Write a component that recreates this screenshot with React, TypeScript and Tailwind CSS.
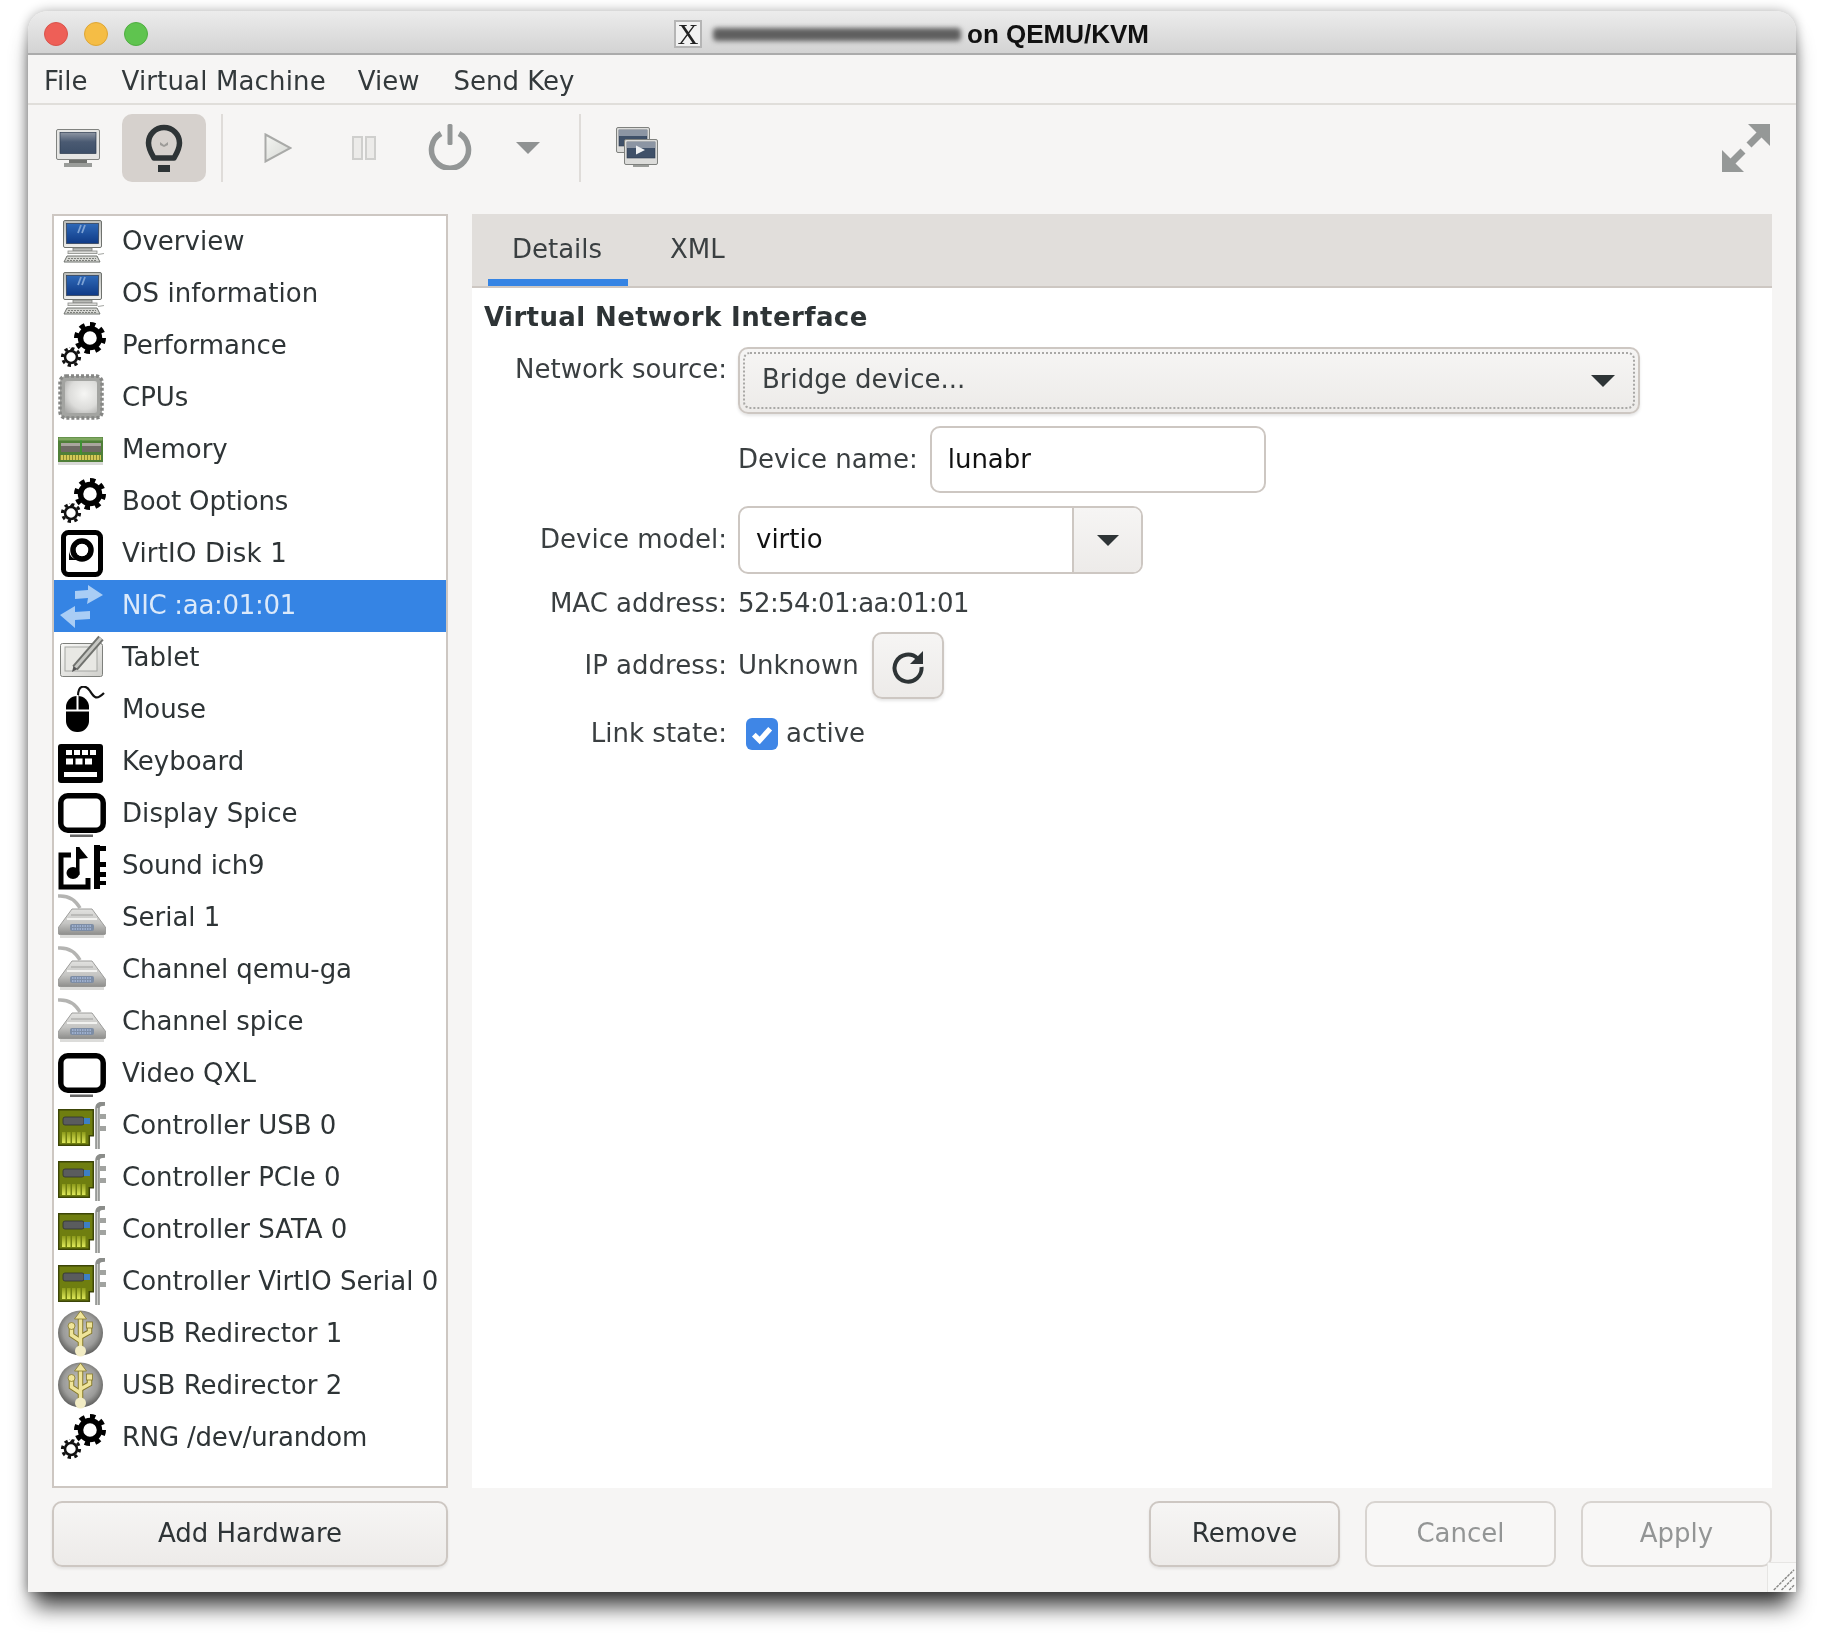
import React from "react";

// sidebar icons all sit in a 48x48 box
function Box({ children }: { children: React.ReactNode }) {
  return (
    <svg viewBox="0 0 48 48" className="w-[48px] h-[48px] shrink-0">
      {children}
    </svg>
  );
}

function ComputerIcon() {
  return (
    <Box>
      <defs>
        <linearGradient id="pcFrame" x1="0" y1="0" x2="0" y2="1">
          <stop offset="0" stopColor="#b9bbb8" />
          <stop offset="1" stopColor="#eeeeec" />
        </linearGradient>
        <linearGradient id="pcScreen" x1="0" y1="0" x2="0" y2="1">
          <stop offset="0" stopColor="#2f69b8" />
          <stop offset="1" stopColor="#0f3a86" />
        </linearGradient>
      </defs>
      <rect x="5.5" y="2.5" width="38" height="27" rx="1.5" fill="url(#pcFrame)" stroke="#6f726e" />
      <rect x="8.5" y="5.5" width="32" height="20" fill="url(#pcScreen)" stroke="#33435a" strokeWidth="0.8" />
      <path d="M23 7l-3 8M27 7l-3 8" stroke="#7ea2d4" strokeWidth="1.8" />
      <rect x="15" y="30" width="19" height="3" fill="#b9bbb7" stroke="#7c7e7a" strokeWidth="0.8" />
      <rect x="10" y="33" width="29" height="2.6" fill="#dededc" stroke="#8a8c88" strokeWidth="0.8" />
      <path d="M6 44l3-6h30l3 6z" fill="#d6d7d3" stroke="#6f726e" />
      <path d="M10 40.5h28M9 42.5h30" stroke="#7d7f7b" strokeWidth="1" strokeDasharray="2 1" />
      <path d="M40 36.5l6-1" stroke="#a5a7a3" strokeWidth="1.2" />
    </Box>
  );
}

function GearsIcon() {
  return (
    <Box>
      <circle cx="32" cy="16" r="9.5" fill="none" stroke="#000" strokeWidth="5.5" />
      <circle cx="32" cy="16" r="13.5" fill="none" stroke="#000" strokeWidth="5" pathLength={16} strokeDasharray="1 1" />
      <circle cx="13" cy="35" r="6" fill="none" stroke="#111" strokeWidth="2.6" />
      <circle cx="13" cy="35" r="8.6" fill="none" stroke="#111" strokeWidth="3" pathLength={16} strokeDasharray="1 1" />
    </Box>
  );
}

function CpuIcon() {
  return (
    <Box>
      <defs>
        <radialGradient id="cpuCore" cx="0.6" cy="0.4" r="0.8">
          <stop offset="0" stopColor="#f6f6f4" />
          <stop offset="0.6" stopColor="#dcdcda" />
          <stop offset="1" stopColor="#a8a8a6" />
        </radialGradient>
      </defs>
      <rect x="2" y="2" width="42" height="42" rx="6" fill="#a3a4a1" />
      <rect x="2" y="2" width="42" height="42" rx="6" fill="none" stroke="#868785" strokeWidth="3.5" strokeDasharray="3 2" />
      <rect x="7" y="7" width="32" height="32" rx="2" fill="url(#cpuCore)" />
    </Box>
  );
}

function MemoryIcon() {
  return (
    <Box>
      <rect x="0" y="11" width="45" height="25" fill="#4f7f38" />
      <rect x="0.5" y="11.5" width="44" height="3" fill="#7fa860" />
      <rect x="3" y="17" width="19" height="9" fill="#6e6a64" />
      <rect x="24" y="17" width="19" height="9" fill="#6e6a64" />
      <rect x="3" y="17" width="19" height="3" fill="#a9a59e" />
      <rect x="24" y="17" width="19" height="3" fill="#a9a59e" />
      <rect x="2" y="29" width="41" height="5" fill="#d3c957" />
      <path d="M2 31.5h41" stroke="#8a8a30" strokeWidth="5" strokeDasharray="1 2" />
      <rect x="22.5" y="14" width="1" height="15" fill="#2fa32f" />
      <rect x="0" y="36" width="45" height="3" fill="#d9d9d7" />
    </Box>
  );
}

function DiskIcon() {
  return (
    <Box>
      <rect x="5.5" y="2.5" width="37" height="42" rx="5" fill="#fff" stroke="#000" strokeWidth="5" />
      <circle cx="24" cy="20" r="9" fill="#fff" stroke="#000" strokeWidth="5.5" />
      <path d="M11 20v10h13v-1.500a9 9 0 0 1-13-8.500z" fill="#000" />
      <circle cx="24" cy="20" r="6" fill="#fff" />
    </Box>
  );
}

function NicIcon() {
  return (
    <Box>
      <path d="M30 3l15 10-16 9 1-6-13 1v-8l13-1z" fill="#a9cdf5" />
      <path d="M2 33l15-9 0 6 15-1v8l-15 1v8z" fill="#a9cdf5" />
    </Box>
  );
}

function TabletIcon() {
  return (
    <Box>
      <defs>
        <linearGradient id="tabBody" x1="0" y1="0" x2="1" y2="1">
          <stop offset="0" stopColor="#fafaf8" />
          <stop offset="1" stopColor="#cfcfcb" />
        </linearGradient>
      </defs>
      <rect x="2.5" y="9.5" width="42" height="33" rx="2" fill="url(#tabBody)" stroke="#7e807c" />
      <rect x="7" y="13" width="32" height="24" fill="#e8e8e4" stroke="#a4a6a2" />
      <path d="M43 4L17 34" stroke="#70726e" strokeWidth="7" />
      <path d="M43 4L17 34" stroke="#c6c7c3" strokeWidth="3" />
      <path d="M14 38l1.500-6 4 3z" fill="#555" />
    </Box>
  );
}

function MouseIcon() {
  return (
    <Box>
      <path d="M20 10c0-12 8-11 12-5s6 10 14 2" fill="none" stroke="#111" strokeWidth="2.200" />
      <rect x="8" y="10" width="23" height="36" rx="11" fill="#000" />
      <rect x="18.5" y="9" width="2" height="15" fill="#fff" />
      <rect x="8" y="23.5" width="23" height="2" fill="#fff" />
    </Box>
  );
}

function KeyboardIcon() {
  return (
    <Box>
      <rect x="0" y="6" width="45" height="39" rx="3" fill="#000" />
      <path d="M8 14.500h31" stroke="#fff" strokeWidth="5" strokeDasharray="6 2" />
      <path d="M8 23.500h26" stroke="#fff" strokeWidth="6" strokeDasharray="7 2.500" />
      <rect x="6" y="34" width="33" height="5" fill="#fff" />
    </Box>
  );
}

function DisplayIcon() {
  return (
    <Box>
      <rect x="2.800" y="5.800" width="42.400" height="34.400" rx="7" fill="#fff" stroke="#000" strokeWidth="5.500" />
      <rect x="12" y="44.500" width="23" height="2.500" fill="#666" />
    </Box>
  );
}

function SoundIcon() {
  return (
    <Box>
      <path d="M13 13H3v32h27v-9" fill="none" stroke="#000" strokeWidth="5" />
      <rect x="18" y="5" width="3.500" height="28" fill="#000" />
      <path d="M21 5l9 11-9 1z" fill="#000" />
      <ellipse cx="15" cy="31" rx="6.500" ry="6" fill="#000" />
      <rect x="36" y="3" width="6" height="44" fill="#000" />
      <rect x="42" y="4" width="6" height="5" fill="#000" />
      <rect x="42" y="20" width="6" height="5" fill="#000" />
      <rect x="42" y="30" width="6" height="5" fill="#000" />
      <rect x="42" y="39" width="6" height="4" fill="#000" />
    </Box>
  );
}

function SerialIcon() {
  return (
    <Box>
      <defs>
        <linearGradient id="serBody" x1="0" y1="0" x2="0" y2="1">
          <stop offset="0" stopColor="#e2e2e0" />
          <stop offset="0.55" stopColor="#c4c4c2" />
          <stop offset="1" stopColor="#8c8c8a" />
        </linearGradient>
      </defs>
      <path d="M0 2c12-1 18 5 22 12" fill="none" stroke="#b4b4b2" strokeWidth="3.500" />
      <path d="M14 15h20l14 19v4a3 3 0 0 1-3 3H3a3 3 0 0 1-3-3v-4z" fill="url(#serBody)" stroke="#9c9c9a" />
      <path d="M9 25h30" stroke="#f2f2f0" strokeWidth="2" />
      <path d="M13 21h22" stroke="#9f9f9d" strokeWidth="1" />
      <rect x="12" y="30" width="24" height="7" rx="2" fill="#7d8da5" />
      <path d="M14 32h20M14 35h20" stroke="#a8bbdd" strokeWidth="1.500" strokeDasharray="1.500 1" />
      <rect x="2" y="41" width="44" height="3" fill="#dcdcda" />
    </Box>
  );
}

function ControllerIcon() {
  return (
    <Box>
      <defs>
        <linearGradient id="cardFingers" x1="0" y1="0" x2="0" y2="1">
          <stop offset="0" stopColor="#8c9a1a" />
          <stop offset="1" stopColor="#dfe95a" />
        </linearGradient>
      </defs>
      <path d="M0.700 7.700h34.600v26h-4v9.600H0.700z" fill="#6f7e10" stroke="#3c4507" strokeWidth="1.500" />
      <rect x="5" y="15" width="21" height="8" rx="2" fill="#5a5c5e" stroke="#2f3133" strokeWidth="0.800" />
      <rect x="26" y="16" width="6" height="6" fill="#3d7fc4" />
      <rect x="4" y="30" width="3.500" height="11" fill="url(#cardFingers)" />
      <rect x="9" y="30" width="3.500" height="11" fill="url(#cardFingers)" />
      <rect x="14" y="30" width="3.500" height="11" fill="url(#cardFingers)" />
      <rect x="19" y="30" width="3.500" height="11" fill="url(#cardFingers)" />
      <rect x="24" y="30" width="3.500" height="11" fill="url(#cardFingers)" />
      <path d="M39.500 47V6c0-3 2-4.500 7.500-4.500" fill="none" stroke="#8b8d8a" strokeWidth="4.500" />
      <path d="M39.500 47V6" stroke="#cfd0cd" strokeWidth="1.400" />
      <path d="M42 12h6v5h-6zM42 24h6v5h-6z" fill="#a1a3a0" />
    </Box>
  );
}

function UsbIcon() {
  return (
    <Box>
      <defs>
        <radialGradient id="usbDisc" cx="0.5" cy="0.45" r="0.55">
          <stop offset="0" stopColor="#c6c6c4" />
          <stop offset="0.7" stopColor="#9b9b99" />
          <stop offset="1" stopColor="#5f5f5d" />
        </radialGradient>
      </defs>
      <circle cx="22.500" cy="23" r="22.500" fill="url(#usbDisc)" />
      <g stroke="#85782a" strokeWidth="5.500" fill="none">
        <path d="M22.500 8v30" />
        <path d="M22.500 31l-9-6v-7M22.500 27l9-5v-4" />
      </g>
      <g stroke="#efe49a" strokeWidth="3.500" fill="none">
        <path d="M22.500 8v30" />
        <path d="M22.500 31l-9-6v-7M22.500 27l9-5v-4" />
      </g>
      <path d="M22.500 1l6 8h-12z" fill="#efe49a" stroke="#85782a" strokeWidth="0.800" />
      <circle cx="13.500" cy="16" r="3.500" fill="#efe49a" stroke="#85782a" strokeWidth="0.800" />
      <rect x="28.500" y="12" width="6" height="6" fill="#efe49a" stroke="#85782a" strokeWidth="0.800" />
      <circle cx="22.500" cy="41" r="5.500" fill="#f2ecc4" />
    </Box>
  );
}

const rows: { label: string; icon: () => React.ReactElement; selected?: boolean; track?: string }[] = [
  { label: "Overview", icon: ComputerIcon },
  { label: "OS information", icon: ComputerIcon, track: "tracking-[0.08px]" },
  { label: "Performance", icon: GearsIcon },
  { label: "CPUs", icon: CpuIcon },
  { label: "Memory", icon: MemoryIcon },
  { label: "Boot Options", icon: GearsIcon, track: "tracking-[-0.2px]" },
  { label: "VirtIO Disk 1", icon: DiskIcon, track: "tracking-[0.2px]" },
  { label: "NIC :aa:01:01", icon: NicIcon, selected: true, track: "tracking-[-0.3px]" },
  { label: "Tablet", icon: TabletIcon },
  { label: "Mouse", icon: MouseIcon, track: "tracking-[-0.1px]" },
  { label: "Keyboard", icon: KeyboardIcon },
  { label: "Display Spice", icon: DisplayIcon, track: "tracking-[0.08px]" },
  { label: "Sound ich9", icon: SoundIcon, track: "tracking-[-0.25px]" },
  { label: "Serial 1", icon: SerialIcon },
  { label: "Channel qemu-ga", icon: SerialIcon, track: "tracking-[-0.08px]" },
  { label: "Channel spice", icon: SerialIcon, track: "tracking-[-0.08px]" },
  { label: "Video QXL", icon: DisplayIcon },
  { label: "Controller USB 0", icon: ControllerIcon },
  { label: "Controller PCIe 0", icon: ControllerIcon },
  { label: "Controller SATA 0", icon: ControllerIcon },
  { label: "Controller VirtIO Serial 0", icon: ControllerIcon },
  { label: "USB Redirector 1", icon: UsbIcon },
  { label: "USB Redirector 2", icon: UsbIcon },
  { label: "RNG /dev/urandom", icon: GearsIcon, track: "tracking-[-0.22px]" },
];

function SmallMonitor({ x, y, play }: { x: number; y: number; play?: boolean }) {
  return (
    <g transform={`translate(${x} ${y})`}>
      <rect x="0.5" y="0.5" width="33" height="25" rx="1.500" fill="#dcdcda" stroke="#7f817e" />
      <rect x="3" y="3" width="28" height="16" fill="#3f5068" stroke="#2c3a4e" strokeWidth="0.6" />
      <rect x="3" y="3" width="28" height="6" fill="#8c95a3" />
      {play && <path d="M12 6.500l9 4.500-9 4.500z" fill="#eef0f2" />}
      <rect x="9" y="26" width="16" height="2" fill="#9b9d9a" />
    </g>
  );
}

function Label({ children, className }: { children: React.ReactNode; className?: string }) {
  return <div className={`w-[255px] text-right text-[#3a3f41] ${className ?? ""}`}>{children}</div>;
}

function PushButton({ children, disabled }: { children: React.ReactNode; disabled?: boolean }) {
  return (
    <button
      className={
        disabled
          ? "w-[191px] h-[66px] pb-[2px] rounded-[10px] border-2 border-[#d8d4d0] bg-[#f8f7f6] text-[#939595]"
          : "w-[191px] h-[66px] pb-[2px] rounded-[10px] border-2 border-[#cdc7c2] bg-gradient-to-b from-[#f6f5f4] to-[#edebe9] text-[#2e3436] shadow-[0_2px_3px_rgba(0,0,0,0.08)]"
      }
    >
      {children}
    </button>
  );
}

export default function App() {
  return (
    <div className="w-[1824px] h-[1636px] bg-white pt-[11px] pl-[28px] font-['DejaVu_Sans',sans-serif] text-[26px] leading-[30px] text-[#2e3436] overflow-hidden">
      <div className="relative w-[1768px] h-[1581px] flex flex-col rounded-t-[20px] bg-[#f6f5f4] blur-[0.5px] shadow-[0_20px_22px_-6px_rgba(0,0,0,0.78),0_0_12px_rgba(0,0,0,0.32)]">
        {/* title bar */}
        <div className="h-[44px] shrink-0 flex items-center pt-[4px] pl-[16px] rounded-t-[20px] border-b-2 border-[#ababab] bg-gradient-to-b from-[#ececec] to-[#d3d3d3]">
          <div className="flex gap-[16px]">
            <span className="w-[24px] h-[24px] rounded-full bg-[#ee5f57] border border-[#d9534b]" />
            <span className="w-[24px] h-[24px] rounded-full bg-[#f5bd45] border border-[#dea635]" />
            <span className="w-[24px] h-[24px] rounded-full bg-[#5fc44f] border border-[#4fae41]" />
          </div>
          <div className="ml-[526px] w-[28px] h-[28px] flex items-center justify-center bg-[#f2f2f2] border-2 border-[#b5b5b5] font-['Liberation_Serif',serif] text-[29px] leading-none text-[#222]">
            X
          </div>
          <div className="ml-[11px] w-[248px] h-[13px] bg-[#5f5f5f] rounded-[4px] blur-[2.5px]" />
          <div className="ml-[6px] font-['Liberation_Sans',sans-serif] font-bold text-[26px] text-[#111]">on QEMU/KVM</div>
        </div>

        {/* menu bar */}
        <div className="h-[50px] shrink-0 flex items-center pt-[4px] pl-[16px] border-b-2 border-[#e0deda] text-[#33393b]">
          <span>File</span>
          <span className="ml-[34px] tracking-[0.15px]">Virtual Machine</span>
          <span className="ml-[32px]">View</span>
          <span className="ml-[34px]">Send Key</span>
        </div>

        {/* toolbar */}
        <div className="h-[86px] shrink-0 flex items-center pl-[28px] pr-[26px]">
          <svg viewBox="0 0 44 38" className="w-[44px] h-[38px]">
            <defs>
              <linearGradient id="tbScreen" x1="0" y1="0" x2="0" y2="1">
                <stop offset="0" stopColor="#8d95a2" />
                <stop offset="0.45" stopColor="#4a5a72" />
                <stop offset="1" stopColor="#3d4f68" />
              </linearGradient>
            </defs>
            <rect x="0.5" y="0.5" width="43" height="30" rx="1.500" fill="#e6e6e4" stroke="#818380" />
            <rect x="4" y="3.500" width="36" height="21" fill="url(#tbScreen)" stroke="#2c3a4e" strokeWidth="0.7" />
            <rect x="13" y="31" width="18" height="3" fill="#6f716e" />
            <rect x="8" y="34" width="28" height="4" fill="#9a9c99" />
          </svg>
          <div className="ml-[22px] w-[84px] h-[68px] rounded-[10px] bg-[#d6d1cd] flex items-center justify-center">
            <svg viewBox="0 0 48 48" className="w-[48px] h-[48px]">
              <path d="M14 34C11 29 8.500 25 8.500 19a15.500 15.500 0 0 1 31 0C39.500 25 37 29 34 34z" fill="none" stroke="#2e3436" strokeWidth="5.500" strokeLinejoin="round" />
              <rect x="18" y="41" width="12" height="7" fill="#2e3436" />
              <path d="M20 18l4 3 4-3v3l-4 2-4-2z" fill="#9d9b98" />
            </svg>
          </div>
          <div className="ml-[15px] w-[2px] h-[68px] bg-[#dfdcd9]" />
          <svg viewBox="0 0 28 30" className="ml-[41px] w-[28px] h-[30px]">
            <defs>
              <linearGradient id="tbPlay" x1="0" y1="0" x2="1" y2="1">
                <stop offset="0" stopColor="#f4f5f2" />
                <stop offset="1" stopColor="#d5d7d3" />
              </linearGradient>
            </defs>
            <path d="M1.500 1.500L26.500 15 1.500 28.500z" fill="url(#tbPlay)" stroke="#a9aaa8" strokeWidth="2" />
          </svg>
          <svg viewBox="0 0 24 24" className="ml-[60px] w-[24px] h-[24px]">
            <rect x="1" y="1" width="9" height="22" fill="#ecebe9" stroke="#cfcfcd" strokeWidth="2" />
            <rect x="14" y="1" width="9" height="22" fill="#ecebe9" stroke="#cfcfcd" strokeWidth="2" />
          </svg>
          <svg viewBox="0 0 44 46" className="ml-[52px] w-[44px] h-[46px] -mt-[2px]">
            <path d="M13 9.500a18.500 18.500 0 1 0 18 0" fill="none" stroke="#939696" strokeWidth="5.500" />
            <rect x="19.500" y="0" width="5" height="21" rx="1.500" fill="#939696" />
          </svg>
          <svg viewBox="0 0 24 12" className="ml-[44px] w-[24px] h-[12px]">
            <path d="M0 0h24L12 12z" fill="#8f9292" />
          </svg>
          <div className="ml-[39px] w-[2px] h-[68px] bg-[#dfdcd9]" />
          <svg viewBox="0 0 42 42" className="ml-[35px] w-[42px] h-[42px]">
            <SmallMonitor x={0} y={0} />
            <SmallMonitor x={8} y={12} play />
          </svg>
          <svg viewBox="0 0 48 48" className="ml-auto w-[48px] h-[48px]">
            <path d="M26 0h22v22z" fill="#959897" />
            <path d="M38 10L27 21" stroke="#959897" strokeWidth="7" />
            <path d="M0 26v22h22z" fill="#959897" />
            <path d="M10 38l11-11" stroke="#959897" strokeWidth="7" />
          </svg>
        </div>

        {/* main area */}
        <div className="flex-1 flex gap-[25px] px-[24px] pt-[23px] pb-[25px] min-h-0">
          {/* hardware list */}
          <div className="w-[396px] shrink-0 flex flex-col gap-[13px]">
            <div className="flex-1 border-2 border-[#cdc7c2] bg-white">
              {rows.map((r) => {
                const Icon = r.icon;
                return (
                  <div
                    key={r.label}
                    className={
                      r.selected
                        ? "h-[52px] flex items-center gap-[16px] pl-[4px] bg-[#3584e4] text-[#dbe9fa] whitespace-nowrap"
                        : "h-[52px] flex items-center gap-[16px] pl-[4px] whitespace-nowrap"
                    }
                  >
                    <Icon />
                    <span className={`mb-[2px] ${r.track ?? ""}`}>{r.label}</span>
                  </div>
                );
              })}
            </div>
            <button className="h-[66px] shrink-0 pb-[2px] rounded-[10px] border-2 border-[#cdc7c2] bg-gradient-to-b from-[#f6f5f4] to-[#edebe9] shadow-[0_2px_3px_rgba(0,0,0,0.08)]">
              Add Hardware
            </button>
          </div>

          {/* detail pane */}
          <div className="flex-1 flex flex-col gap-[13px] min-w-0 -ml-[1px]">
            <div className="flex-1 flex flex-col bg-white">
              <div className="h-[74px] shrink-0 flex pl-[16px] gap-[17px] bg-[#e1dedb] border-b-2 border-[#cdc7c2]">
                <div className="w-[140px] flex items-center justify-center pt-[4px] pr-[2px] border-b-[7px] border-[#3584e4] text-[#3a3f41]">Details</div>
                <div className="px-[25px] flex items-center pt-[4px] pb-[7px] text-[#3a3f41]">XML</div>
              </div>
              <h2 className="mt-[14px] pl-[12px] font-bold text-[26px] tracking-[0.4px] text-[#2e3436]">Virtual Network Interface</h2>

              <div className="flex flex-col">
                <div className="mt-[15px] flex gap-[11px]">
                  <Label className="pt-[7px]">Network source:</Label>
                  <div className="w-[902px] h-[67px] rounded-[10px] border-2 border-[#cdc7c2] bg-gradient-to-b from-[#f6f5f4] to-[#edebe9] p-[3px] shadow-[0_2px_3px_rgba(0,0,0,0.1)]">
                    <div className="h-full rounded-[7px] border-2 border-dotted border-[#a9a8a6] flex items-center justify-between pl-[17px] pr-[18px] text-[#3a3f41]">
                      <span className="pb-[4px]">Bridge device...</span>
                      <svg viewBox="0 0 24 12" className="w-[24px] h-[12px]">
                        <path d="M0 0h24L12 12z" fill="#2e3436" />
                      </svg>
                    </div>
                  </div>
                </div>

                <div className="mt-[12px] flex items-center pl-[266px] gap-[12px]">
                  <span className="pb-[2px] text-[#3a3f41]">Device name:</span>
                  <div className="w-[336px] h-[67px] rounded-[10px] border-2 border-[#cdc7c2] bg-white flex items-center pl-[16px] pb-[2px] text-[#111]">lunabr</div>
                </div>

                <div className="mt-[13px] flex items-center gap-[11px]">
                  <Label className="pb-[2px]">Device model:</Label>
                  <div className="w-[405px] h-[68px] flex rounded-[10px] border-2 border-[#cdc7c2] bg-white">
                    <div className="flex-1 flex items-center pl-[16px] pb-[2px] text-[#111]">virtio</div>
                    <div className="w-[69px] flex items-center justify-center rounded-r-[8px] border-l-2 border-[#cdc7c2] bg-gradient-to-b from-[#f6f5f4] to-[#edebe9]">
                      <svg viewBox="0 0 24 12" className="w-[22px] h-[11px]">
                        <path d="M0 0h24L12 12z" fill="#2e3436" />
                      </svg>
                    </div>
                  </div>
                </div>

                <div className="mt-[14px] flex gap-[11px]">
                  <Label>MAC address:</Label>
                  <span className="tracking-[-0.6px] text-[#3a3f41]">52:54:01:aa:01:01</span>
                </div>

                <div className="mt-[14px] flex items-center gap-[11px]">
                  <Label className="pb-[2px]">IP address:</Label>
                  <span className="pb-[2px] text-[#3a3f41]">Unknown</span>
                  <div className="ml-[2px] w-[72px] h-[67px] rounded-[10px] border-2 border-[#cdc7c2] bg-gradient-to-b from-[#f6f5f4] to-[#edebe9] flex items-center justify-center shadow-[0_2px_3px_rgba(0,0,0,0.1)]">
                    <svg viewBox="0 0 36 36" className="w-[36px] h-[36px]">
                      <path d="M27.500 10.500A13.500 13.500 0 1 0 31.500 19" fill="none" stroke="#2e3436" strokeWidth="4" />
                      <path d="M33 3v13H20z" fill="#2e3436" />
                    </svg>
                  </div>
                </div>

                <div className="mt-[19px] flex items-center gap-[11px]">
                  <Label className="pb-[2px]">Link state:</Label>
                  <div className="ml-[8px] w-[32px] h-[32px] rounded-[6px] bg-[#3f86e6] flex items-center justify-center">
                    <svg viewBox="0 0 24 24" className="w-[28px] h-[28px]">
                      <path d="M5 12.500l5 5 9-10" fill="none" stroke="#fff" strokeWidth="4.500" />
                    </svg>
                  </div>
                  <span className="-ml-[3px] pb-[2px] text-[#3a3f41]">active</span>
                </div>
              </div>
            </div>

            <div className="shrink-0 flex justify-end gap-[25px]">
              <PushButton>Remove</PushButton>
              <PushButton disabled>Cancel</PushButton>
              <PushButton disabled>Apply</PushButton>
            </div>
          </div>
        </div>

        {/* resize grip */}
        <div className="absolute right-0 bottom-0 w-[29px] h-[30px] bg-[#f8f8f7] border-l border-t border-[#e6e5e3]">
          <svg viewBox="0 0 29 30" className="w-full h-full">
            <path d="M6 28L27 7M14 28L27 15M22 28l5-5" stroke="#8a8a88" strokeWidth="1.500" strokeDasharray="3 1" />
          </svg>
        </div>
      </div>
    </div>
  );
}
